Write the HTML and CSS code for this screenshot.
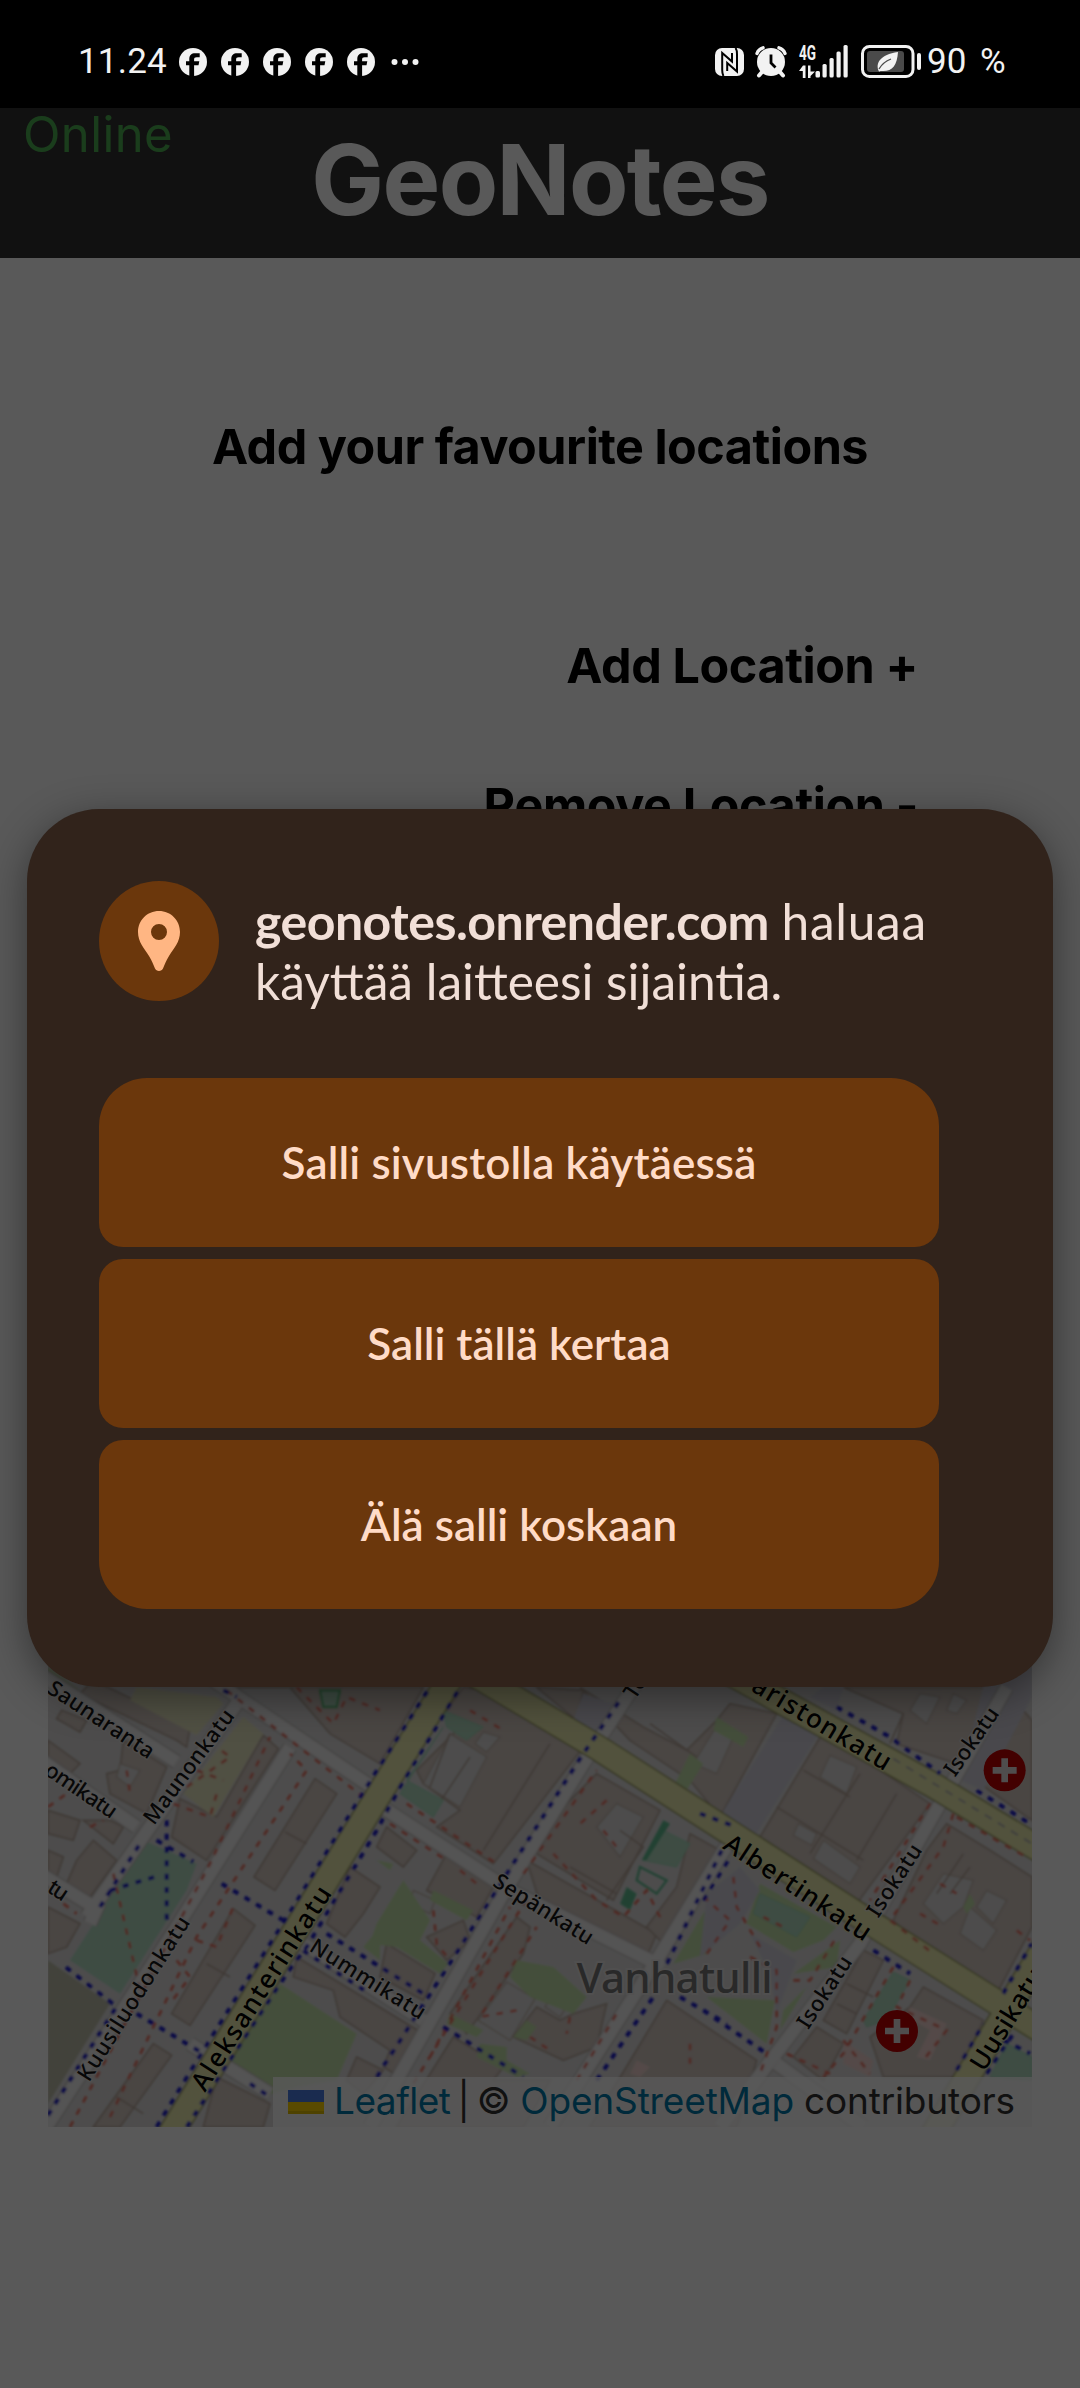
FILE: index.html
```html
<!DOCTYPE html>
<html lang="fi">
<head>
<meta charset="utf-8">
<title>GeoNotes</title>
<link rel="stylesheet" href="styles.css">
</head>
<body>
<div class="status">
  <span class="time">11.24</span>
  <svg width="0" height="0" class="defs"><symbol id="fb" viewBox="0 0 28 28"><circle cx="14" cy="14" r="14" fill="#f2f2f2"/><path d="M10.3 28.5V17.2H7v-4h3.3V11c0-3.8 2.2-5.8 5.8-5.8h4.6v4h-3c-1.9 0-2.6.8-2.6 2.3v1.7h5.2l-.8 4h-4.4v11.3z" fill="#000"/></symbol></svg>
  <div class="notes">
    <svg width="28" height="28"><use href="#fb"/></svg>
    <svg width="28" height="28"><use href="#fb"/></svg>
    <svg width="28" height="28"><use href="#fb"/></svg>
    <svg width="28" height="28"><use href="#fb"/></svg>
    <svg width="28" height="28"><use href="#fb"/></svg>
  </div>
  <svg class="dots" width="28" height="8" viewBox="0 0 28 8" fill="#f2f2f2"><circle cx="3.5" cy="4" r="3"/><circle cx="14" cy="4" r="3"/><circle cx="24.500" cy="4" r="3"/></svg>
  <div class="system">
    <svg class="nfc" width="29" height="28" viewBox="0 0 29 28"><rect width="29" height="28" rx="7" fill="#f2f2f2"/><path d="M8.500 28Q7.200 26 7.200 22V5L17 13.500V5M20.500 0Q22 2 22 6V23.500L12.200 15V23" fill="none" stroke="#000" stroke-width="2"/></svg>
    <svg class="alarm" width="32" height="32" viewBox="0 0 32 32"><g stroke="#f2f2f2" fill="none" stroke-linecap="round"><path d="M2 7.500Q3.500 3 8 1.800M30 7.500Q28.500 3 24 1.800" stroke-width="3.400"/><path d="M7 26L4 29.500M25 26L28 29.500" stroke-width="4"/></g><circle cx="16" cy="16" r="14" fill="#f2f2f2"/><path d="M16 8.500V17L20.500 21.500" fill="none" stroke="#000" stroke-width="2.800"/></svg>
    <svg class="signal" width="49" height="33" viewBox="0 0 49 33" fill="#f2f2f2"><text x="0" y="15" font-size="20" font-weight="700" textLength="17" lengthAdjust="spacingAndGlyphs">4G</text><path d="M0 26L4 20.500H6.500V33H3.800V26zM9 20.500H11.500V26.500H16L11.500 31V33H9z"/><rect x="16.500" y="26" width="4.500" height="6.500" rx="1.500"/><rect x="23.500" y="19" width="4.200" height="13.500" rx="1.500"/><rect x="30.500" y="13" width="4.200" height="19.500" rx="1.500"/><rect x="37.500" y="6.500" width="4.200" height="26" rx="1.500"/><rect x="44.500" y="0" width="4.200" height="32.500" rx="1.500"/></svg>
    <svg class="battery" width="60" height="33" viewBox="0 0 60 33"><rect x="1.500" y="1.500" width="50.500" height="30" rx="7" fill="none" stroke="#f2f2f2" stroke-width="3"/><rect x="6" y="6" width="37" height="21" rx="3" fill="#4a4a4a"/><path d="M37 7C36 21 31 27 20 26c-1 0-1 .5-2 .5-4-8 1-17 19-19.500z" fill="#f2f2f2"/><path d="M18 24Q22 17 30 14" stroke="#4a4a4a" stroke-width="1.300" fill="none"/><rect x="56" y="8" width="4" height="17" rx="2" fill="#f2f2f2"/></svg>
    <span class="percent">90 %</span>
  </div>
</div>

<div class="page">
  <header class="header">
    <span class="online">Online</span>
    <h1>GeoNotes</h1>
  </header>
  <main class="main">
    <h2>Add your favourite locations</h2>
    <div class="action">Add Location +</div>
    <div class="action remove">Remove Location -</div>
    <div class="map">
      <svg width="984" height="800" viewBox="54 -1000 2952 2400">
        <defs><filter id="soft" x="0" y="0" width="1" height="1"><feGaussianBlur stdDeviation="2.500"/></filter></defs>
        <rect x="54" y="-1000" width="2952" height="2400" fill="#dcdbdb"/>
        <g filter="url(#soft)">
          <!-- buildings -->
          <g fill="#d3c8c1" stroke="#b3a296" stroke-width="5">
            <path d="M150 100L190 60L480 200L470 260L440 240z"/>
            <path d="M95 150L170 180L150 215L80 175z"/>
            <path d="M280 240L410 320L350 460L240 400L230 340L270 330z"/>
            <path d="M54 240L150 310L110 350L54 330z"/>
            <path d="M54 450L150 480L130 540L54 520zM160 480L250 550L280 500L240 480zM190 540L260 600L180 710L110 670L140 600zM54 570L100 590L80 650L54 640zM54 740L150 790L110 860L54 880z"/>
            <path d="M700 225L745 265L530 600L425 530L450 415L560 470z"/>
            <path d="M620 81L780 81L900 220L1050 310L1180 81z"/>
            <path d="M855 355L920 400L735 690L672 650z"/>
            <path d="M610 745L675 795L480 1095L425 1060z"/>
            <path d="M960 620L1050 680L1000 760L945 830L890 790z"/>
            <path d="M370 1150L425 1185L270 1400L190 1400z"/>
            <path d="M770 1040L845 1085L810 1150L750 1260L668 1220z"/>
            <path d="M800 890L1180 1120L1110 1250L1060 1220L1080 1170L930 1070L910 990L790 950z"/>
            <path d="M560 1250L720 1330L700 1400L520 1400zM980 1190L1060 1230L1000 1300L950 1260z"/>
            <path d="M1300 81L1420 100L1660 260L1390 610L1220 500L1290 450L1180 370L1160 330L1280 210L1250 150z"/>
            <path d="M1070 500L1160 570L1120 620L1040 560zM1250 580L1390 680L1340 770L1190 690z"/>
            <path d="M1300 780L1320 840L1250 900L1190 830zM1070 850L1215 940L1180 1020L1050 950z"/>
            <path d="M1700 340L1890 450L1750 720L1520 580L1600 440z"/>
            <path d="M1490 600L1880 820L1850 890L1540 760z"/>
            <path d="M1460 770L1500 800L1480 880L1310 1120L1260 1060z"/>
            <path d="M1270 1130L1420 1220L1390 1260L1560 1260L1480 1400L1100 1400z"/>
            <path d="M1980 520L2070 570L1900 850L1850 800L1940 680z"/>
            <path d="M1520 1040L1590 1080L1630 1060L1730 1030L1700 1160L1600 1200L1450 1130z"/>
            <path d="M1910 1020L2180 1200L2120 1400L1680 1400z"/>
            <path d="M1650 81L1840 200L1970 270L2060 180L2100 130L2240 160L2070 470L1980 360L1800 240z"/>
            <path d="M1520 81L1660 90L1640 180z"/>
            <path d="M2380 215L2700 430L2480 730L2190 530z"/>
            <path d="M2440 81L2620 160L2600 250L2780 310L2850 180L2880 81z"/>
            <path d="M2980 150L3006 180L3006 480L2850 370z"/>
            <path d="M2750 490L2880 570L3006 650L3006 800L2900 1000L2690 880L2590 780L2690 570z"/>
            <path d="M2500 870L2560 900L2450 1120L2380 1080z"/>
            <path d="M2680 980L2860 1080L2780 1250L2560 1250L2520 1130L2640 1040z"/>
            <path d="M2360 1100L2440 1150L2380 1260L2290 1190z"/>
          </g>
          <!-- courtyards -->
          <g fill="#dcdbdb" stroke="#beb0a4" stroke-width="4">
            <path d="M1260 220L1370 290L1290 440L1180 370z"/>
            <path d="M1360 215L1410 230L1370 275L1335 250z"/>
            <path d="M1760 430L1840 470L1770 590L1700 500z"/>
            <path d="M1430 965L1515 1015L1440 1140L1345 1080z"/>
            <path d="M1565 1005L1615 1030L1590 1070L1545 1040zM1150 690L1215 720L1200 760L1140 730z"/>
            <path d="M2400 285L2480 320L2450 400L2370 350zM2380 540L2490 620L2460 670L2350 595zM2305 490L2360 520L2345 555L2290 525z"/>
            <path d="M2740 640L2830 660L2800 740L2740 790L2680 730zM2870 690L2930 720L2890 790L2840 740zM2820 740L2900 810L2860 870L2790 820z"/>
            <path d="M2670 100L2730 110L2690 190L2640 150zM2770 100L2810 120L2780 160L2750 150z"/>
            <path d="M270 310L330 330L300 380L260 350zM2070 180L2110 230L2060 340L1990 310z"/>
          </g>
          <g fill="none" stroke="#b3a296" stroke-width="5">
            <path d="M1560 250L1360 570M1770 510L1840 560L1730 720M2490 340L2340 580M2240 440L2500 600M2320 330L2460 410M2600 400L2480 600M2620 160L2580 250M2820 620L2760 700M765 515L830 550M530 910L600 950M260 1310L340 1360M1320 290L1220 440M1260 220L1200 380M1860 190L2000 290M1620 620L1760 700M2800 580L2720 700M2450 970L2530 1010M2420 1030L2480 1060"/>
          </g>
          <!-- parks and pitches -->
          <g fill="#c3dfa8">
            <path d="M54 20L150 90L110 110L54 60z"/>
            <path d="M750 970L980 1120L920 1260L800 1280L690 1310L600 1200zM1050 800L1050 900L1000 860z"/>
            <path d="M1120 660L1200 780L1170 840L1255 910L1230 940L1100 860L1020 850L1040 790zM1210 690L1330 750L1310 780L1200 720zM1040 600L1090 610L1080 630z"/>
            <path d="M1460 900L1570 920L1670 1010L1630 1060L1500 1010L1440 950zM1260 1060L1360 1110L1340 1130L1250 1090zM1350 1150L1430 1160L1430 1200L1500 1240L1460 1250L1340 1190zM1490 1080L1520 1100L1490 1140L1450 1130z"/>
            <path d="M2040 725L2105 770L2030 880L1930 910zM2030 1010L2235 1020L2210 1150zM2430 840L2420 920L2290 940zM2330 980L2250 1110L2260 1050z"/>
            <path d="M2190 670L2420 800L2380 840L2290 875L2150 790zM2060 170L2155 230L2140 260L2050 210zM1980 280L2020 310L1970 390L1930 380zM2820 700L2835 730L2810 760L2800 740z"/>
            <path d="M2990 1060L3006 1140L2940 1100zM80 920L110 950L90 980L60 960z"/>
          </g>
          <g fill="#b1dbc1" stroke="#9bd3b3" stroke-width="3">
            <path d="M340 540L500 610L470 690L270 1000L120 900L210 760z" stroke="none"/>
            <path d="M2190 700L2340 770L2300 830L2170 760zM1240 150L1360 200L1310 240L1250 200zM1240 200L1130 360L1240 420L1210 470L1110 400z" />
            <path d="M2590 935L2640 960L2570 1080L2510 1100L2500 1080zM2930 1150L3006 1190L3006 1260L2880 1250zM1900 510L1980 550L1940 620L1840 600z"/>
            <path d="M870 90L930 90L920 140L880 140z" stroke="#5bbd7a" stroke-width="7"/>
            <path d="M1900 480L1920 490L1850 600L1835 600zM1790 680L1820 700L1800 750L1770 730z" fill="#60bb91" stroke="none"/>
            <path d="M1830 620L1910 660L1880 700L1820 660z" fill="none" stroke="#60bb91" stroke-width="7"/>
          </g>
          <path d="M320 81L560 110L580 130L500 225L300 120zM640 170L700 220L550 470L460 400z" fill="#e6e4c0"/>
          <path d="M54 900L240 1030L54 1330z" fill="#bdbda9"/>
          <path d="M2640 1040L2750 1090L2700 1200L2660 1190L2700 1110L2630 1070zM2440 1140L2530 1200L2520 1250L2440 1210zM1820 1200L1860 1220L1830 1250L1800 1240z" fill="#efd2cd"/>
          <g fill="#d0cfdb"><path d="M2260 165L2380 200L2170 535L2075 460zM2880 0L3006 20L3006 110L2860 390L2790 360zM2030 700L2130 620L2190 690L2130 790L2010 890zM2160 820L2300 900L2240 1060L2220 940zM1660 100L1750 130L1700 210L1630 180zM2380 81L2440 81L2420 150L2340 110z"/></g>
          <!-- side streets -->
          <path d="M20 35L440 305M20 290L320 500M620 130L170 770M30 640L200 745L180 790M550 60L1040 390M30 1430L440 800L780 260M1040 430L1440 690L1900 920M1020 1400L1420 700L1660 310L1830 50M1560 1400L1880 900L2100 540M2070 1400L2200 1230L2490 850L2730 430L2930 81M480 1150L720 1300M820 850L1180 1080M2240 1210L2500 1400" fill="none" stroke="#c0bcb9" stroke-width="46"/>
          <path d="M20 35L440 305M20 290L320 500M620 130L170 770M30 640L200 745L180 790M550 60L1040 390M30 1430L440 800L780 260M1040 430L1440 690L1900 920M1020 1400L1420 700L1660 310L1830 50M1560 1400L1880 900L2100 540M2070 1400L2200 1230L2490 850L2730 430L2930 81M480 1150L720 1300M820 850L1180 1080M2240 1210L2500 1400" fill="none" stroke="#f0efef" stroke-width="38"/>
          <!-- main streets -->
          <g fill="none" stroke="#8e9052" stroke-width="80"><path d="M400 1457L1300 -10M1280 10L1700 260L2510 780L3050 1120M2050 10L2710 375L3050 580M2700 1440L3050 850"/></g>
          <g fill="none" stroke="#eaebae" stroke-width="72"><path d="M400 1457L1300 -10M1280 10L1700 260L2510 780L3050 1120M2050 10L2710 375L3050 580M2700 1440L3050 850"/></g>
          <!-- foot paths -->
          <g fill="none" stroke="#e5705f" stroke-width="8" stroke-dasharray="20 22">
            <path d="M120 1400L540 610L720 230M240 1370L500 830L830 330L780 280M590 90L1000 410M800 81L910 190L950 110L1050 150M1080 490L1250 600M1130 430L1400 610M1150 1270L1500 700M1200 1190L1440 740M1480 640L1700 330M1460 1050L1350 1070L1520 800M1570 580L1700 720L1780 770L1850 690L1900 790"/>
            <path d="M2110 650L2120 740L2190 860M2030 880L2100 780L2010 700M2160 890L2240 930L2240 1100L2190 1240M2290 960L2340 960L2420 830M2700 430L2520 720M2770 460L2740 560L2580 780L2710 880M2590 920L2440 1180L2380 1250M2640 960L2600 1040L2750 1110L2680 1200M2440 1140L2520 1240M2780 470L2900 540L2990 590M470 380L600 290L560 260M500 330L580 360M430 430L540 470L560 400M250 640L330 990"/>
            <path d="M290 330L300 400M54 440L110 400M180 500L220 480M100 730L140 760M440 900L480 950L420 1030M500 840L560 860L610 740M1210 750L1220 850L1260 900M1290 630L1340 670M1320 150L1420 210M1730 420L1650 490M1720 510L1760 560M1980 1150L1980 1210M1640 1260L1760 1060M2200 770L2260 800M2730 670L2780 700M2670 760L2740 800M2270 1180L2400 1240M1500 1130L1560 1170M1620 1070L1610 1120M2960 810L3000 840"/>
          </g>
          <!-- cycle paths -->
          <g fill="none" stroke="#1c1cc8" stroke-width="12" stroke-dasharray="18 22">
            <path d="M54 1365L260 1040L100 915M210 740L330 550M240 690L390 645M410 480L410 780M380 540L490 605M320 1060L520 1180M380 1400L520 1170L740 820L790 740L1010 380L1200 81M470 1400L560 1260L770 940L830 860L1040 510L1110 380L1290 81M575 670L760 780M890 820L1180 1000M820 870L1020 1000M580 90L620 110"/>
            <path d="M1040 1250L1400 690L1660 280L1770 120M1240 1100L1480 1250M1700 1260L1870 1010M1950 1010L2090 1090M1910 910L2080 560M2020 1050L2210 1180M2020 720L2100 590M2530 870L2640 940M2840 390L3000 490M2780 1230L2860 1090M2920 1000L3006 850M2870 1240L2950 1120M2920 1140L3000 1180M660 1270L720 1310M2420 140L2580 230L2730 340M2010 460L2120 500" />
          </g>
          <path d="M2590 295L3006 550" fill="none" stroke="#a9a6b0" stroke-width="5" stroke-dasharray="24 22"/>
        </g>
        <!-- hospitals -->
        <g fill="#bf0000"><circle cx="2924" cy="330" r="63"/><circle cx="2601" cy="1112" r="63"/></g>
        <path d="M2888 330H2960M2924 294V366M2565 1112H2637M2601 1076V1148" stroke="#e3dcdc" stroke-width="20"/>
        <!-- labels -->
        <g class="label">
          <text transform="translate(48 95) rotate(33.500)" textLength="368">Saunaranta</text>
          <text transform="translate(372 497) rotate(-53.500)" textLength="410">Maunonkatu</text>
          <text transform="translate(40 340) rotate(34)" textLength="245">omikatu</text>
          <text transform="translate(48 692) rotate(33)" textLength="60">tu</text>
          <text transform="translate(177 1267) rotate(-57.600)" textLength="570">Kuusiluodonkatu</text>
          <text transform="translate(835 870) rotate(32)" textLength="395">Nummikatu</text>
          <text transform="translate(1385 675) rotate(32)" textLength="340">Sepänkatu</text>
          <text transform="translate(2775 352) rotate(-55)" textLength="235">Isokatu</text>
          <text transform="translate(2545 775) rotate(-57)" textLength="245">Isokatu</text>
          <text transform="translate(2335 1110) rotate(-57)" textLength="245">Isokatu</text>
          <text transform="translate(1815 120) rotate(-57)">To</text>
        </g>
        <g class="label major">
          <text transform="translate(525 1297) rotate(-57.400)" textLength="710">Aleksanterinkatu</text>
          <text transform="translate(2160 90) rotate(31)" textLength="472">aristonkatu</text>
          <text transform="translate(2075 563) rotate(33.400)" textLength="512">Albertinkatu</text>
          <text transform="translate(2862 1237) rotate(-58)" textLength="345">Uusikatu</text>
        </g>
        <text class="district" x="1640" y="998" textLength="588">Vanhatulli</text>
      </svg>
      <div class="credit">
        <svg width="36" height="24" viewBox="0 0 36 24"><path fill="#4c7be1" d="M0 0h36v12H0z"/><path fill="#ffd500" d="M0 12h36v9H0z"/><path fill="#e0bc00" d="M0 21h36v3H0z"/></svg>
        <a>Leaflet</a><span class="bar">|</span><span>©</span><a>OpenStreetMap</a><span>contributors</span>
      </div>
    </div>
  </main>
  <div class="scrim"></div>
</div>

<div class="dialog">
  <div class="prompt">
    <svg width="120" height="120" viewBox="0 0 120 120"><circle cx="60" cy="60" r="60" fill="#6b370c"/><path fill-rule="evenodd" fill="#ffb683" d="M60 30C48 30 39 39.500 39 51c0 10 6 16 11 24 3 5 4.500 9 6 12.500 1.300 3.300 6.700 3.300 8 0 1.500-3.500 3-7.500 6-12.500 5-8 11-14 11-24 0-11.500-9-21-21-21zm0 13a8 8 0 1 1 0 16a8 8 0 1 1 0-16z"/></svg>
    <p><b>geonotes.onrender.com</b> <span>haluaa</span><br>käyttää laitteesi sijaintia.</p>
  </div>
  <div class="choices">
    <button>Salli sivustolla käytäessä</button>
    <button>Salli tällä kertaa</button>
    <button>Älä salli koskaan</button>
  </div>
</div>
</body>
</html>
```
FILE: styles.css
```css
* { box-sizing: border-box; margin: 0; padding: 0; }
body { position: relative; width: 1080px; height: 2388px; overflow: hidden; background: #000; font-family: Lato, sans-serif; }
svg { display: block; flex: none; }

.status { height: 108px; padding: 15px 73px 0 78px; display: flex; align-items: center; color: #f2f2f2; font: 35px Roboto, sans-serif; }
.status text { font-family: Roboto, sans-serif; }
.defs { width: 0; }
.time { width: 101px; letter-spacing: .2px; }
.notes { display: flex; gap: 14px; }
.dots { margin-left: 16px; }
.system { margin-left: auto; display: flex; align-items: center; }
.nfc { margin-right: 11px; }
.alarm { margin-right: 12px; }
.signal { margin-right: 13px; overflow: visible; }
.battery { margin-right: 6px; }
.percent { width: 80px; white-space: nowrap; word-spacing: 5px; }

.page { position: relative; height: 2280px; background: #fff; font-family: Inter, sans-serif; }
.header { position: relative; height: 150px; background: #333; color: #fff; text-align: center; }
.header h1 { font-size: 97px; line-height: 143px; font-weight: 700; letter-spacing: -1.6px; }
.online { position: absolute; left: 23px; top: 0; font-size: 49px; line-height: 53px; letter-spacing: .4px; color: #4caf50; }
.main { padding: 158px 48px 0; }
.main h2, .action { font-size: 48.5px; line-height: 62px; font-weight: 700; letter-spacing: -.5px; color: #000; text-align: center; }
.action { margin-top: 157px; padding-right: 114px; text-align: right; letter-spacing: -.4px; }
.action.remove { margin-top: 78px; }
.map { position: relative; margin-top: 490px; width: 984px; height: 800px; overflow: hidden; }
.label { font: 500 65px "Noto Sans", sans-serif; fill: #151515; stroke: #e8e6e4; stroke-width: 8px; stroke-opacity: .6; paint-order: stroke; }
.major { font-size: 78px; fill: #000; stroke: #eaebae; }
.district { font: 500 126px "Noto Sans", sans-serif; fill: #777; stroke: #e8e6e4; stroke-width: 12px; stroke-opacity: .7; paint-order: stroke; }
.credit { position: absolute; right: 0; bottom: 0; width: 759px; height: 50px; padding-left: 15px; display: flex; gap: 10px; background: rgba(255,255,255,.8); color: #333; font-size: 37px; line-height: 47px; letter-spacing: -.15px; white-space: nowrap; }
.credit svg { margin-top: 13px; }
.credit a { color: #0078a8; }
.credit a:first-of-type { letter-spacing: -.5px; }
.bar { margin: 0 -3px; }
.scrim { position: absolute; inset: 0; background: rgba(0,0,0,.65); }

.dialog { position: absolute; left: 27px; top: 809px; width: 1026px; height: 878px; padding: 72px; border-radius: 72px; background: #31231b; box-shadow: 0 10px 40px rgba(0,0,0,.42); }
.prompt { display: flex; gap: 36px; height: 197px; }
.prompt p { padding-top: 10px; font-size: 49.6px; line-height: 60px; color: #f1dfd7; white-space: nowrap; }
.prompt b { font-weight: 700; font-size: 50px; letter-spacing: -.5px; }
.prompt span { letter-spacing: .7px; }
.choices { width: 840px; display: flex; flex-direction: column; gap: 12px; }
.choices button { height: 169px; border: 0; padding-bottom: 1px; border-radius: 24px; background: #6b370c; color: #ffdbc7; font: 600 44px Lato, sans-serif; }
.choices button:first-child { border-radius: 48px 48px 24px 24px; letter-spacing: .15px; }
.choices button:last-child { border-radius: 24px 24px 48px 48px; }
```
